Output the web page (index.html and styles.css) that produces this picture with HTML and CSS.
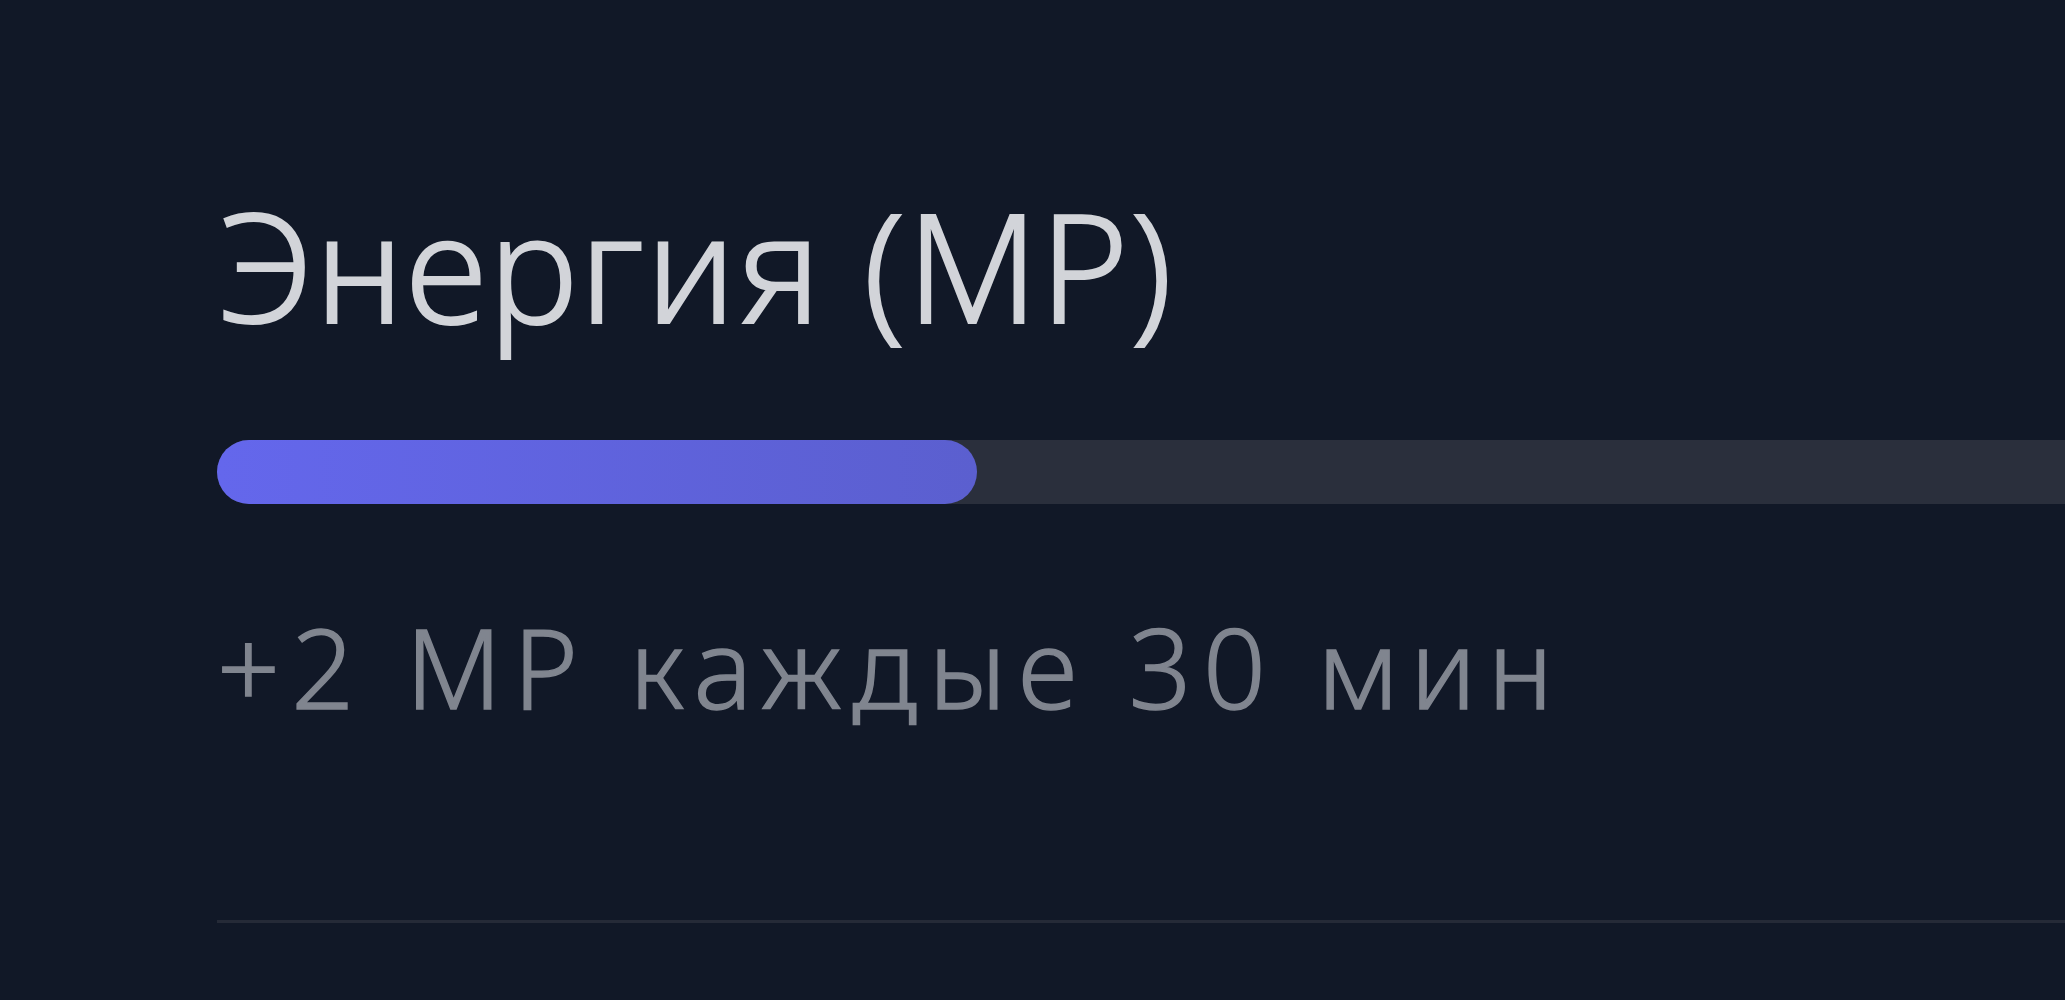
FILE: index.html
```html
<!DOCTYPE html>
<html lang="ru">
<head>
  <meta charset="UTF-8">
  <meta name="viewport" content="width=device-width, initial-scale=1.0">
  <title>Энергия</title>
  <link rel="stylesheet" href="styles.css">
</head>
<body>
  <div class="stat">
    <h2 class="stat-title">Энергия (MP)</h2>
    <div class="stat-track">
      <div class="stat-fill" style="width: 41.1%;"></div>
    </div>
    <p class="stat-note">+2 MP каждые 30 мин</p>
    <hr class="stat-divider">
  </div>
</body>
</html>
```

FILE: styles.css
```css
html, body {
  margin: 0;
  padding: 0;
  height: 100%;
  overflow: hidden;
}
body {
  background: #111827;
  font-family: "Noto Sans", "Open Sans", sans-serif;
}
.stat {
  display: flex;
  flex-direction: column;
  padding: 189px 0 0 217px;
}
.stat-title {
  margin: 0;
  font-size: 151px;
  font-weight: 300;
  line-height: 1;
  letter-spacing: 1.5px;
  color: #d2d4d9;
  -webkit-text-stroke: 2px #d2d4d9;
}
.stat-track {
  margin-top: 100px;
  height: 64px;
  background: #2a2f3c;
  border-radius: 32px 0 0 32px;
}
.stat-fill {
  height: 100%;
  border-radius: 32px;
  background: linear-gradient(to right, #6467ec, #5b5fcf);
}
.stat-note {
  margin: 107px 0 0;
  font-size: 110px;
  font-weight: 300;
  line-height: 1;
  letter-spacing: 11.5px;
  color: #80858f;
  -webkit-text-stroke: 1.5px #80858f;
}
.stat-divider {
  margin: 199px 0 0;
  border: none;
  height: 3px;
  background: #252a37;
}
```
